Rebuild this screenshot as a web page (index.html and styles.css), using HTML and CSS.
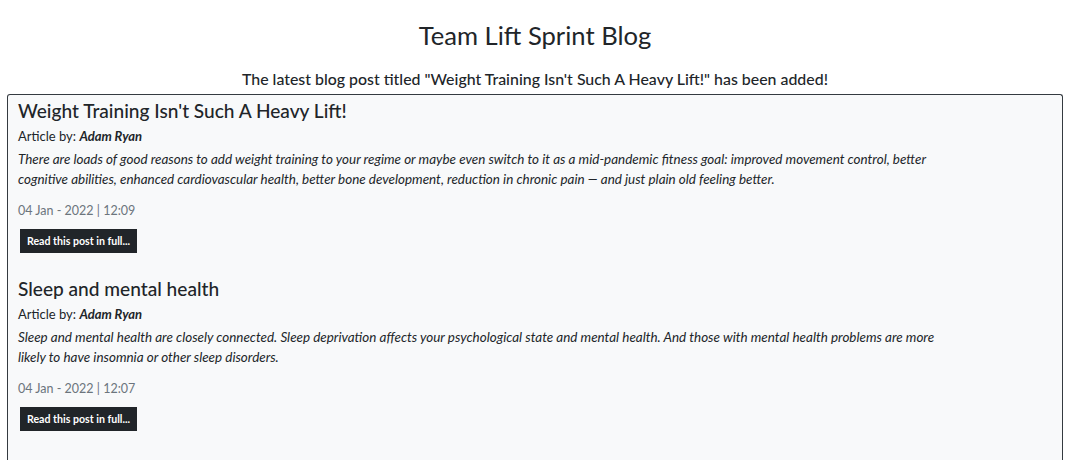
FILE: index.html
```html
<!DOCTYPE html>
<html>
<head>
<meta charset="utf-8">
<link rel="stylesheet" href="styles.css">
</head>
<body>
<header class="page-head">
  <h1 class="site-title">Team Lift Sprint Blog</h1>
  <h2 class="notice">The latest blog post titled "Weight Training Isn't Such A Heavy Lift!" has been added!</h2>
</header>
<main class="posts">
  <article class="post">
    <h3 class="post-title">Weight Training Isn't Such A Heavy Lift!</h3>
    <p class="author">Article by: <b><i>Adam Ryan</i></b></p>
    <p class="summary">There are loads of good reasons to add weight training to your regime or maybe even switch to it as a mid-pandemic fitness goal: improved movement control, better cognitive abilities, enhanced cardiovascular health, better bone development, reduction in chronic pain — and just plain old feeling better.</p>
    <p class="date">04 Jan - 2022 | 12:09</p>
    <a class="read-btn" href="#">Read this post in full...</a>
  </article>
  <article class="post">
    <h3 class="post-title">Sleep and mental health</h3>
    <p class="author">Article by: <b><i>Adam Ryan</i></b></p>
    <p class="summary">Sleep and mental health are closely connected. Sleep deprivation affects your psychological state and mental health. And those with mental health problems are more likely to have insomnia or other sleep disorders.</p>
    <p class="date">04 Jan - 2022 | 12:07</p>
    <a class="read-btn" href="#">Read this post in full...</a>
  </article>
</main>
</body>
</html>
```
FILE: styles.css
```css
* { box-sizing: border-box; }
body {
  margin: 0;
  font-family: Lato, "Open Sans", sans-serif;
  color: #212529;
  background: #fff;
}
.page-head {
  text-align: center;
  padding-top: 17px;
  margin: 0 20px 0 7px;
}
.site-title {
  margin: 0;
  font-size: 25.6px;
  font-weight: 400;
  line-height: 36px;
}
.notice {
  margin: 14px 0 3px;
  font-size: 15.9px;
  font-weight: 500;
  line-height: 24px;
}
.posts {
  margin: 0 20px 0 7px;
  border: 1px solid #343a40;
  border-bottom: none;
  border-radius: 3px 3px 0 0;
  background: #f8f9fa;
  padding: 4px 10px 20px;
  min-height: 366px;
}
.post {
  margin-bottom: 24px;
}
.post-title {
  margin: 0;
  font-size: 19.1px;
  font-weight: 500;
  line-height: 24px;
}
.author {
  margin: 4px 0 0;
  font-size: 13px;
  line-height: 18px;
}
.summary {
  margin: 4px 0 0;
  font-size: 13.45px;
  line-height: 20px;
  font-style: italic;
  max-width: 935px;
}
.date {
  margin: 12px 0 0;
  font-size: 12.5px;
  line-height: 20px;
  color: #6c757d;
}
.read-btn {
  display: inline-block;
  margin: 8px 0 0 2px;
  background: #212529;
  color: #fff;
  font-size: 10.6px;
  font-weight: 700;
  line-height: 24px;
  padding: 0 7px;
  text-decoration: none;
}
```
